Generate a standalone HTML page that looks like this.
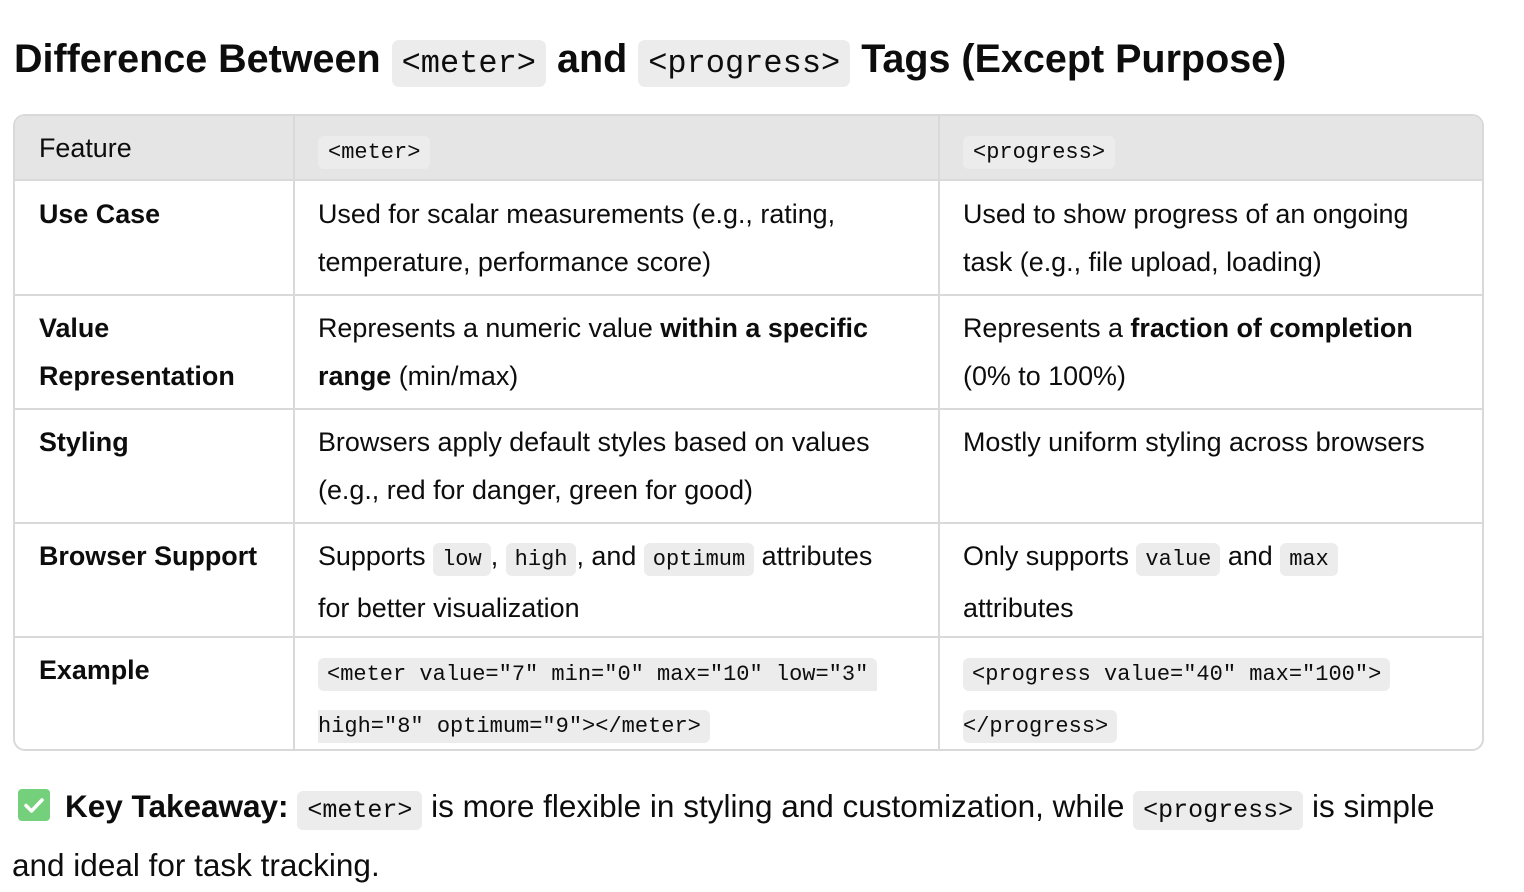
<!DOCTYPE html>
<html><head><meta charset="utf-8"><style>
*{margin:0;padding:0;box-sizing:border-box}
body{width:1524px;height:890px;background:#fff;font-family:"Liberation Sans",sans-serif;color:#0d0d0d;position:relative;overflow:hidden}
.a{position:absolute;white-space:nowrap}
code{font-family:"Liberation Mono",monospace;background:#ececec;border-radius:6px;padding:4px 9px;font-size:22px}
.t{font-size:26.9px;line-height:48px}
h1{position:absolute;left:14px;top:30px;font-size:39.5px;font-weight:bold;white-space:nowrap;line-height:58px}
h1 code{font-size:32px;font-weight:normal;padding:5px 10px;border-radius:7px}
.tbl{position:absolute;left:13px;top:114px;width:1471px;height:637px;border:2px solid #d9d9d9;border-radius:12px;overflow:hidden}
.hd{position:absolute;left:0;top:0;width:100%;height:65px;background:#e5e5e5;border-bottom:2px solid #d9d9d9}
.hl{position:absolute;left:0;width:100%;height:2px;background:#d9d9d9}
.vl{position:absolute;top:0;width:2px;height:100%;background:#d9d9d9}
b{font-weight:bold}
</style></head><body>
<h1>Difference Between <code>&lt;meter&gt;</code> and <code>&lt;progress&gt;</code> Tags (Except Purpose)</h1>
<div class="tbl">
<div class="hd"></div>
<div class="hl" style="top:178px"></div>
<div class="hl" style="top:292px"></div>
<div class="hl" style="top:406px"></div>
<div class="hl" style="top:520px"></div>
<div class="vl" style="left:278px"></div>
<div class="vl" style="left:923px"></div>
</div>
<div class="a t" style="left:39px;top:124px">Feature</div>
<div class="a t" style="left:318px;top:125px"><code style="padding:4px 10px">&lt;meter&gt;</code></div>
<div class="a t" style="left:963px;top:125px"><code style="padding:4px 10px">&lt;progress&gt;</code></div>

<div class="a t" style="left:39px;top:190px;font-weight:bold">Use Case</div>
<div class="a t" style="left:318px;top:190px">Used for scalar measurements (e.g., rating,<br>temperature, performance score)</div>
<div class="a t" style="left:963px;top:190px">Used to show progress of an ongoing<br>task (e.g., file upload, loading)</div>

<div class="a t" style="left:39px;top:304px;font-weight:bold">Value<br>Representation</div>
<div class="a t" style="left:318px;top:304px">Represents a numeric value <b>within a specific</b><br><b>range</b> (min/max)</div>
<div class="a t" style="left:963px;top:304px">Represents a <b>fraction of completion</b><br>(0% to 100%)</div>

<div class="a t" style="left:39px;top:418px;font-weight:bold">Styling</div>
<div class="a t" style="left:318px;top:418px">Browsers apply default styles based on values<br>(e.g., red for danger, green for good)</div>
<div class="a t" style="left:963px;top:418px">Mostly uniform styling across browsers</div>

<div class="a t" style="left:39px;top:532px;font-weight:bold">Browser Support</div>
<div class="a t" style="left:318px;top:532px">Supports <code>low</code>, <code>high</code>, and <code>optimum</code> attributes<br>for better visualization</div>
<div class="a t" style="left:963px;top:532px">Only supports <code>value</code> and <code>max</code><br>attributes</div>

<div class="a t" style="left:39px;top:646px;font-weight:bold">Example</div>
<div class="a t" style="left:318px;top:647px"><code style="border-radius:6px 6px 0 6px">&lt;meter value="7" min="0" max="10" low="3"</code><br><code style="padding-left:0;border-radius:0 6px 6px 0">high="8" optimum="9"&gt;&lt;/meter&gt;</code></div>
<div class="a t" style="left:963px;top:647px"><code>&lt;progress value="40" max="100"&gt;</code><br><code style="padding-left:0">&lt;/progress&gt;</code></div>

<div class="a" style="left:18px;top:789px;width:32px;height:32px;background:#74d07b;border-radius:4px">
<svg width="32" height="32" viewBox="0 0 32 32"><path d="M8 16.5l5.5 5.5L24 11" stroke="#fff" stroke-width="3.5" fill="none" stroke-linecap="round" stroke-linejoin="round"/></svg></div>
<div class="a" style="left:12px;top:779px;font-size:31.5px;line-height:54px;white-space:normal;width:1450px;text-indent:53px"><b>Key Takeaway:</b> <code style="font-size:25px;padding:5px 10px">&lt;meter&gt;</code> is more flexible in styling and customization, while <code style="font-size:25px;padding:5px 10px">&lt;progress&gt;</code> is simple and ideal for task tracking.</div>
</body></html>
